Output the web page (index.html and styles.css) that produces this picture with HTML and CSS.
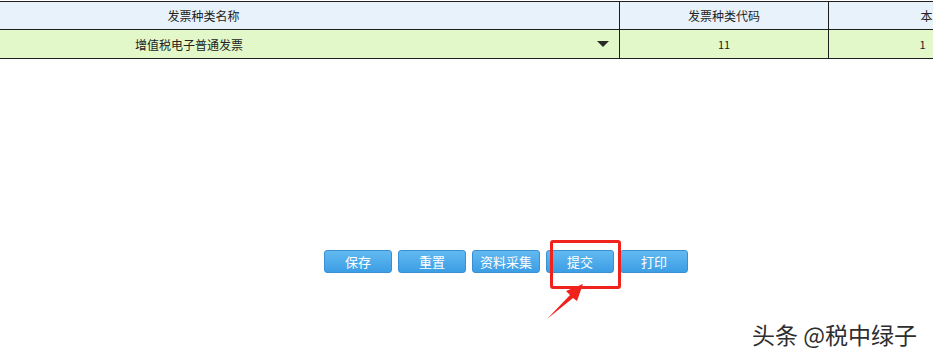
FILE: index.html
```html
<!DOCTYPE html>
<html lang="zh-CN">
<head>
<meta charset="utf-8">
<link rel="stylesheet" href="styles.css">
</head>
<body>
<div class="page">
  <table class="grid">
    <colgroup>
      <col class="c1">
      <col class="c2">
      <col class="c3">
    </colgroup>
    <tr class="head">
      <td>发票种类名称</td>
      <td>发票种类代码</td>
      <td>本次领用数量</td>
    </tr>
    <tr class="row">
      <td><div class="sel"><span class="sel-text">增值税电子普通发票</span><span class="caret"></span></div></td>
      <td class="num">11</td>
      <td class="num"><span class="v3">1</span></td>
    </tr>
  </table>
  <div class="actions">
    <button class="btn">保存</button>
    <button class="btn">重置</button>
    <button class="btn">资料采集</button>
    <button class="btn">提交</button>
    <button class="btn">打印</button>
  </div>
  <div class="mark-box"></div>
  <svg class="mark-arrow" width="50" height="45" viewBox="0 0 50 45">
    <path d="M3 39 L26 15 L22 11 L39 4 L33 21 L29 18 Z" fill="#f0231c"/>
  </svg>
  <div class="watermark">头条 @税中绿子</div>
</div>
</body>
</html>
```
FILE: styles.css
```css
html, body {
  margin: 0;
  padding: 0;
  background: #fff;
  width: 933px;
  height: 357px;
  overflow: hidden;
  font-family: "Noto Sans CJK SC", "Liberation Sans", sans-serif;
}
.page {
  position: relative;
  width: 933px;
  height: 357px;
  overflow: hidden;
}
.grid {
  border-collapse: collapse;
  margin-left: -213px;
  margin-top: 1px;
  width: 1297px;
  font-size: 12px;
  color: #222;
  table-layout: fixed;
}
.grid td {
  border: 1px solid #1e1e1e;
  padding: 0;
  text-align: center;
  overflow: hidden;
  white-space: nowrap;
}
.c1 { width: 832px; }
.c2 { width: 209px; }
.c3 { width: 256px; }
.head td {
  height: 27px;
  background: #e8f2fa;
}
.row td {
  height: 28px;
  background: #e2f8c8;
}
.num { font-size: 11px; }
.v3 {
  display: inline-block;
  margin-right: 68px;
}
.sel {
  display: flex;
  align-items: center;
  height: 28px;
  padding-left: 347px;
  padding-right: 10px;
}
.sel-text {
  font-size: 12px;
  width: 108px;
  text-align: left;
}
.caret {
  margin-left: auto;
  width: 0;
  height: 0;
  border-left: 6px solid transparent;
  border-right: 6px solid transparent;
  border-top: 6px solid #2a2a2a;
}
.actions {
  display: flex;
  gap: 6px;
  padding-left: 324px;
  margin-top: 191px;
}
.btn {
  width: 68px;
  height: 23px;
  border: 1px solid #3a8fd2;
  border-radius: 3px;
  background: linear-gradient(#62b9f0, #3c9ee4);
  color: #fff;
  font-family: "Noto Sans CJK SC", sans-serif;
  font-size: 13px;
  padding: 0;
  line-height: 20px;
}
.mark-box {
  position: absolute;
  left: 550px;
  top: 240px;
  width: 65px;
  height: 43px;
  border: 3px solid #f0231c;
  border-radius: 3px;
}
.mark-arrow {
  position: absolute;
  left: 544px;
  top: 280px;
}
.watermark {
  position: absolute;
  left: 752px;
  top: 317px;
  font-size: 23px;
  color: #2e2e2e;
  text-shadow: 1px 1px 0 #fff, -1px -1px 0 #fff;
}
```
